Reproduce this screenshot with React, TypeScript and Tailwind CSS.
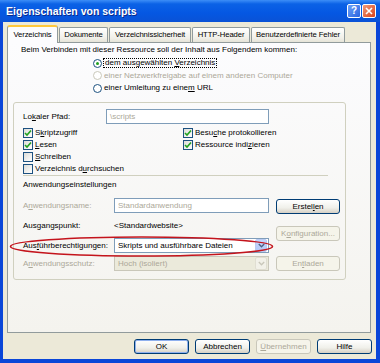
import React from "react";

// XP-style "Eigenschaften von scripts" dialog

const U = ({ children }: { children: React.ReactNode }) => (
  <span className="underline underline-offset-1">{children}</span>
);

const CheckBox = ({ checked, children }: { checked?: boolean; children: React.ReactNode }) => (
  <div className="flex h-[12px] items-center gap-[2px]">
    <div className="flex h-[10px] w-[10px] items-center justify-center border border-[#1c5180] bg-[linear-gradient(135deg,#dcdcd7,#ffffff)]">
      {checked && (
        <svg width="8" height="8" viewBox="0 0 8 8">
          <path d="M1 4 L3 6 L7 1.5" fill="none" stroke="#21a121" strokeWidth="1.6" />
        </svg>
      )}
    </div>
    <span>{children}</span>
  </div>
);

const Radio = ({
  checked,
  disabled,
  focus,
  children,
}: {
  checked?: boolean;
  disabled?: boolean;
  focus?: boolean;
  children: React.ReactNode;
}) => (
  <div className={"flex h-[12.5px] items-center gap-[2px] " + (disabled ? "text-[#aca899]" : "")}>
    <div
      className={
        "flex h-[9px] w-[9px] items-center justify-center rounded-full border bg-white " +
        (disabled ? "border-[#cac8bb]" : "border-[#1c5180]")
      }
    >
      {checked && <div className="h-[3px] w-[3px] rounded-full bg-[#21a121]" />}
    </div>
    <span className={focus ? "px-px outline outline-1 outline-dotted outline-black" : ""}>{children}</span>
  </div>
);

const Btn = ({
  children,
  disabled,
  w = "w-[55px]",
  def,
}: {
  children: React.ReactNode;
  disabled?: boolean;
  w?: string;
  def?: boolean;
}) => (
  <div
    className={
      "flex h-[15px] items-center justify-center rounded-[3px] border " +
      w +
      " " +
      (disabled
        ? "border-[#c9c7ba] bg-[#f5f4ea] text-[#aca899]"
        : "border-[#003c74] bg-[linear-gradient(180deg,#ffffff,#f0f0ea_60%,#d6d0c5)] text-black") +
      (def ? " shadow-[inset_0_0_0_1px_#8fb0ee]" : "")
    }
  >
    {children}
  </div>
);

const Field = ({ children, w, disabled }: { children: React.ReactNode; w: string; disabled?: boolean }) => (
  <div
    className={
      "flex h-[15px] items-center border border-[#7f9db9] px-[3px] " +
      w +
      " " +
      (disabled ? "text-[#aca899] bg-white" : "bg-white")
    }
  >
    {children}
  </div>
);

const Combo = ({ children, disabled }: { children: React.ReactNode; disabled?: boolean }) => (
  <div
    className={
      "flex h-[15px] w-[155px] items-center justify-between border pl-[3px] " +
      (disabled ? "border-[#c9c7ba] bg-[#ebeadb] text-[#aca899]" : "border-[#7f9db9] bg-white text-black")
    }
  >
    <span>{children}</span>
    <div
      className={
        "mr-px flex h-[13px] w-[12px] items-center justify-center rounded-[2px] " +
        (disabled ? "bg-[#f2f1e9] border border-[#e0ded2]" : "bg-[linear-gradient(180deg,#c6d6fd,#b3c8f7)] border border-[#b9cbf3]")
      }
    >
      <svg width="7" height="5" viewBox="0 0 7 5">
        <path d="M0.8 1 L3.5 3.7 L6.2 1" fill="none" stroke={disabled ? "#c9c7ba" : "#4d6185"} strokeWidth="1.4" />
      </svg>
    </div>
  </div>
);

const tabs = [
  { label: "Verzeichnis", w: "w-[51px]", active: true },
  { label: "Dokumente", w: "w-[49px]" },
  { label: "Verzeichnissicherheit", w: "w-[82px]" },
  { label: "HTTP-Header", w: "w-[58px]" },
  { label: "Benutzerdefinierte Fehler", w: "w-[94px]" },
];

export default function App() {
  return (
    <div className="relative flex h-[363px] w-[380px] flex-col bg-[#0a46d8] font-['Liberation_Sans',Arial,sans-serif] text-[8px] leading-none text-black">
      {/* title bar */}
      <div className="flex h-[22px] items-center justify-between bg-[linear-gradient(180deg,#3d8ef7_0%,#0b62e6_18%,#0557e2_60%,#0a52d6_100%)] pl-[6px] pr-[4px]">
        <span className="text-[10.5px] font-bold text-white [text-shadow:1px_1px_0_#0a2a8c]">
          Eigenschaften von scripts
        </span>
        <div className="flex gap-[1px]">
          <div className="flex h-[14px] w-[14px] items-center justify-center rounded-[2px] border border-white bg-[linear-gradient(135deg,#6ea2f8,#2a63e0)] text-[10px] font-bold text-white">
            ?
          </div>
          <div className="flex h-[14px] w-[14px] items-center justify-center rounded-[2px] border border-white bg-[linear-gradient(135deg,#f09a7a,#d9431b)]">
            <svg width="8" height="8" viewBox="0 0 8 8">
              <path d="M1 1 L7 7 M7 1 L1 7" stroke="white" strokeWidth="1.6" />
            </svg>
          </div>
        </div>
      </div>

      {/* body */}
      <div className="mb-[4px] ml-[3px] mr-[4px] flex flex-1 flex-col bg-[#ece9d8] pl-[4px] pr-[4px] pt-[3px]">
        {/* tabs */}
        <div className="flex h-[17px] items-end gap-[1px] whitespace-nowrap text-[7.7px] tracking-[-0.1px]">
          {tabs.map((t) =>
            t.active ? (
              <div
                key={t.label}
                className={
                  "relative z-10 -mb-px flex h-[18px] items-center justify-center rounded-t-[3px] border-x border-t-[2px] border-x-[#919b9c] border-t-[#ffc83c] bg-[#fcfcfe] " +
                  t.w
                }
              >
                {t.label}
              </div>
            ) : (
              <div
                key={t.label}
                className={
                  "flex h-[15px] items-center justify-center rounded-t-[2px] border-x border-t border-[#919b9c] bg-[linear-gradient(180deg,#ffffff,#f1f0e9_70%,#e6e4d8)] " +
                  t.w
                }
              >
                {t.label}
              </div>
            )
          )}
        </div>

        {/* tab panel */}
        <div className="flex h-[291px] w-[364px] flex-col border border-[#919b9c] bg-[linear-gradient(180deg,#fcfcfe,#f4f3ee)]">
          <div className="flex h-[14px] items-center pl-[13px]">
            Beim Verbinden mit dieser Ressource soll der Inhalt aus Folgendem kommen:
          </div>
          <div className="flex h-[45px] flex-col pl-[85px]">
            <Radio checked focus>
              dem ausgewählten <U>V</U>erzeichnis
            </Radio>
            <Radio disabled>einer Netzwerkfreigabe auf einem anderen Computer</Radio>
            <Radio>
              einer Umleitung zu eine<U>m</U> URL
            </Radio>
          </div>

          {/* group box */}
          <div className="ml-[5px] flex h-[178px] w-[333px] flex-col rounded-[3px] border border-[#d0d0bf] pl-[9px]">
            <div className="mt-[6px] flex h-[15px] items-center">
              <span className="w-[83px]">
                Lo<U>k</U>aler Pfad:
              </span>
              <Field w="w-[163px]" disabled>
                \scripts
              </Field>
            </div>
            <div className="mt-[3px] grid grid-cols-[160px_1fr]">
              <CheckBox checked>
                S<U>k</U>riptzugriff
              </CheckBox>
              <CheckBox checked>
                Besu<U>c</U>he protokollieren
              </CheckBox>
              <CheckBox checked>
                <U>L</U>esen
              </CheckBox>
              <CheckBox checked>
                Ressource indi<U>z</U>ieren
              </CheckBox>
              <CheckBox>
                <U>S</U>chreiben
              </CheckBox>
              <div />
              <CheckBox>
                Verzeichnis d<U>u</U>rchsuchen
              </CheckBox>
            </div>
            <div className="mt-[0px] h-px w-[305px] bg-[#d0d0bf]" />
            <div className="mt-[3px] flex h-[12px] items-center">Anwendungseinstellungen</div>

            <div className="flex">
              <div className="flex w-[253px] flex-col">
                <div className="mt-[7px] flex h-[15px] items-center">
                  <span className="w-[91px] text-[#aca899]">
                    A<U>n</U>wendungsname:
                  </span>
                  <Field w="w-[155px]" disabled>
                    Standardanwendung
                  </Field>
                </div>
                <div className="flex h-[25px] items-center">
                  <span className="w-[91px]">Ausgangspunkt:</span>
                  <span>&lt;Standardwebsite&gt;</span>
                </div>
                <div className="flex h-[15px] items-center">
                  <span className="w-[91px]">
                    Aus<U>f</U>ührberechtigungen:
                  </span>
                  <Combo>Skripts und ausführbare Dateien</Combo>
                </div>
                <div className="mt-[3px] flex h-[15px] items-center">
                  <span className="w-[91px] text-[#aca899]">
                    A<U>n</U>wendungsschutz:
                  </span>
                  <Combo disabled>Hoch (isoliert)</Combo>
                </div>
              </div>
              <div className="flex flex-col">
                <div className="mt-[8px]">
                  <Btn w="w-[64px]">
                    Erstel<U>l</U>en
                  </Btn>
                </div>
                <div className="mt-[12px]">
                  <Btn w="w-[64px]" disabled>
                    K<U>o</U>nfiguration...
                  </Btn>
                </div>
                <div className="mt-[15px]">
                  <Btn w="w-[64px]" disabled>
                    En<U>t</U>laden
                  </Btn>
                </div>
              </div>
            </div>
          </div>
        </div>

        {/* dialog buttons */}
        <div className="mt-[6px] flex justify-end gap-[6px] pr-0">
          <Btn def>OK</Btn>
          <Btn>Abbrechen</Btn>
          <Btn disabled>
            <U>Ü</U>bernehmen
          </Btn>
          <Btn>Hilfe</Btn>
        </div>
      </div>

      {/* red annotation ellipse */}
      <svg className="pointer-events-none absolute left-0 top-0" width="380" height="363">
        <ellipse cx="141.5" cy="246.5" rx="131" ry="9.5" fill="none" stroke="#c4141c" strokeWidth="1.6" />
      </svg>
    </div>
  );
}
